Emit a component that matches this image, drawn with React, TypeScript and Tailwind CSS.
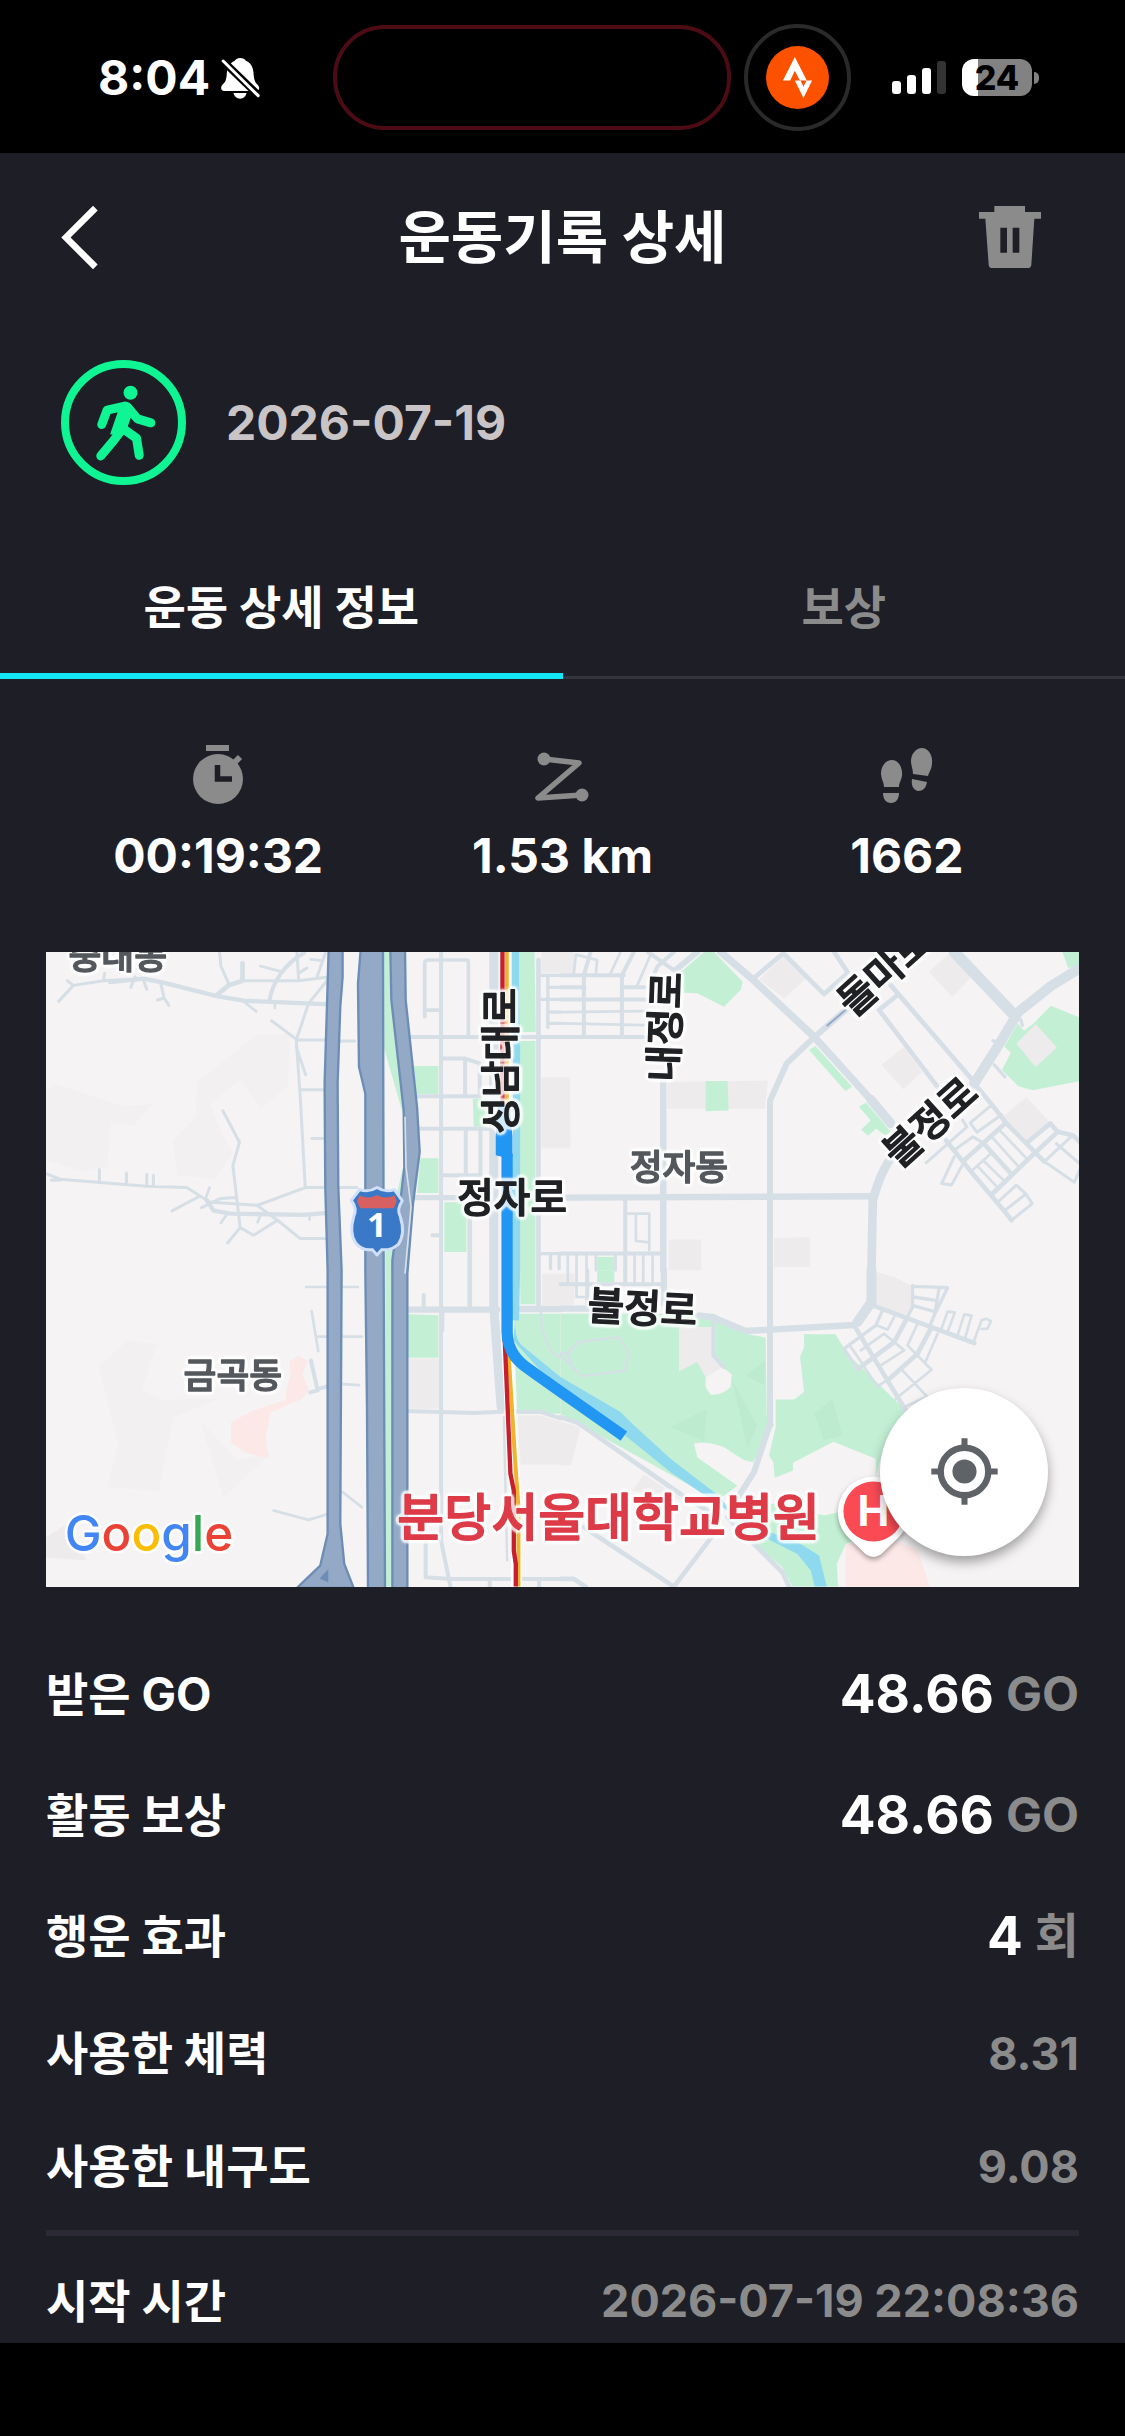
import React from "react";

const LABEL_FONT = "'Noto Sans CJK KR', 'Noto Sans', sans-serif";

function BellOffIcon() {
  return (
    <svg viewBox="510 76 122 126" className="h-[42px] w-[41px]" aria-hidden="true">
      <path
        d="M570 79c-9 0-14 5-17 9-15 6-22 20-23 36-1 18-3 26-12 34-4 4-5 8-5 11 0 6 4 9 9 9h96c6 0 9-4 9-9 0-3-2-7-6-11-8-8-10-18-11-34-1-19-9-32-23-37-3-5-9-8-17-8z"
        fill="#fff"
      />
      <path d="M550 184h39c-2 10-9 17-19 17s-18-7-20-17z" fill="#fff" />
      <path d="M512 82L634 200" stroke="#000" strokeWidth="23" />
      <path d="M519 88L624 192" stroke="#fff" strokeWidth="9" strokeLinecap="round" />
    </svg>
  );
}

function StravaIcon() {
  return (
    <svg viewBox="107 108 190 190" className="size-[63px]" aria-hidden="true">
      <circle cx="202" cy="203" r="95" fill="#fc5200" />
      <path d="M194 141L230 212H209L194 183L180 212H158Z" fill="#fff" />
      <path d="M194 212H211L220 231L229 212H246L220 265Z" fill="#fff" />
    </svg>
  );
}

function SignalIcon() {
  return (
    <div className="flex items-end gap-[6px]" role="img" aria-label="신호 세기">
      <span className="h-[13px] w-[9px] rounded-[3px] bg-white" />
      <span className="h-[19px] w-[9px] rounded-[3px] bg-white" />
      <span className="h-[26px] w-[9px] rounded-[3px] bg-white" />
      <span className="h-[33px] w-[9px] rounded-[3px] bg-[#333]" />
    </div>
  );
}

function StatusBar() {
  return (
    <div className="flex h-[153px] items-center bg-black pt-[2px] pr-[86px] pl-[98px] text-white">
      <div className="flex flex-1 items-center gap-[10px]">
        <span className="text-[48px] leading-none font-bold">8:04</span>
        <BellOffIcon />
      </div>
      <div className="flex items-center gap-[13px]">
        <div className="h-[105px] w-[398px] rounded-[52px] border-4 border-[#4d0c13]" />
        <div className="flex size-[107px] items-center justify-center rounded-full border-4 border-[#2a2a2a]">
          <StravaIcon />
        </div>
      </div>
      <div className="ml-[41px] flex items-center gap-[16px]">
        <SignalIcon />
        <div className="flex items-center gap-[2px]">
          <div className="flex h-[37px] w-[70px] items-center justify-center rounded-[12px] bg-linear-to-r from-white from-[23%] to-[#828282] to-[23%] text-[34px] leading-none font-extrabold text-black">
            24
          </div>
          <div className="h-[12px] w-[5px] rounded-r-full bg-[#828282]" />
        </div>
      </div>
    </div>
  );
}

function Header() {
  return (
    <header className="grid h-[168px] grid-cols-[1fr_auto_1fr] items-center pr-[84px] pl-[61px]">
      <button type="button" aria-label="뒤로" className="justify-self-start">
        <svg viewBox="34 524 112 194" className="h-[65px] w-[37px]" aria-hidden="true">
          <path d="M138 532L49 621L138 710" fill="none" stroke="#fff" strokeWidth="20" />
        </svg>
      </button>
      <h1 className="pl-[23px] text-[57px] leading-none font-bold text-white">운동기록 상세</h1>
      <button type="button" aria-label="삭제" className="justify-self-end">
        <svg viewBox="747 588 186 186" className="size-[62px]" aria-hidden="true">
          <path
            fillRule="evenodd"
            fill="#8b8b8b"
            d="M793 588h92v18h48v20h-20l-9 138q-1 10-11 10H787q-10 0-11-10l-10-138h-19v-20h46zM811 653v75h20v-75zM848 653v75h20v-75z"
          />
        </svg>
      </button>
    </header>
  );
}

function WalkIcon() {
  return (
    <svg viewBox="35 988 374 374" className="size-[125px]" role="img" aria-label="걷기">
      <circle cx="222" cy="1175" r="175" fill="none" stroke="#0ff593" strokeWidth="24" />
      <circle cx="243" cy="1086" r="21" fill="#0ff593" />
      <g fill="none" stroke="#0ff593" strokeWidth="27" strokeLinecap="round" strokeLinejoin="round">
        <path d="M226 1126L173 1138L157 1181" />
        <path d="M233 1128L264 1164L304 1176" />
        <path d="M222 1190L189 1233L154 1275" />
        <path d="M220 1193L261 1222L269 1273" />
      </g>
      <path d="M204 1146Q212 1118 232 1113Q250 1124 249 1146L233 1192L210 1214L182 1210Z" fill="#0ff593" />
    </svg>
  );
}

function StopwatchIcon() {
  return (
    <svg viewBox="0 0 120 120" className="size-[60px]" aria-hidden="true">
      <rect x="36" y="0" width="46" height="12" fill="#8b8b8b" />
      <circle cx="60" cy="68" r="50" fill="#8b8b8b" />
      <path d="M90 38L104 24" stroke="#8b8b8b" strokeWidth="12" />
      <path d="M59 40V68H88" fill="none" stroke="#1e1e26" strokeWidth="11" />
    </svg>
  );
}

function RouteIcon() {
  return (
    <svg viewBox="0 0 120 120" className="size-[60px]" aria-hidden="true">
      <path
        d="M24 28L94 36L12 106L100 100"
        fill="none"
        stroke="#8b8b8b"
        strokeWidth="11"
        strokeLinejoin="round"
      />
      <circle cx="24" cy="28" r="13" fill="#8b8b8b" />
      <circle cx="100" cy="100" r="13" fill="#8b8b8b" />
    </svg>
  );
}

function StepsIcon() {
  return (
    <svg viewBox="0 0 60 60" className="size-[60px]" aria-hidden="true">
      <g fill="#8b8b8b">
        <path d="M15 15C21 15 26 22 25 31C24 36 22 38 22 42H7C7 37 4 34 4 28C4 21 9 15 15 15Z" />
        <path d="M6 48H22C22 54 19 58 14 58C9 58 6 54 6 48Z" />
        <path d="M45 3C51 3 56 10 55 18C55 24 52 27 51 31L36 29C36 24 34 21 34 16C34 9 39 3 45 3Z" />
        <path d="M35 34L50 37C49 43 46 46 41 46C36 45 34 40 35 34Z" />
      </g>
    </svg>
  );
}

const stats = [
  { label: "운동 시간", value: "00:19:32", icon: <StopwatchIcon /> },
  { label: "거리", value: "1.53 km", icon: <RouteIcon /> },
  { label: "걸음 수", value: "1662", icon: <StepsIcon /> },
];

type Road = { w: number; d: string };

const westRoads: Road[] = [
  { w: 13, d: "M210 126L310 116L370 128L530 168L610 182L866 193" },
  { w: 9, d: "M56 184L100 136L190 122L300 116M82 122L100 136M190 122L194 100M310 120L320 148M285 110L272 142M362 130L372 174L386 196M352 180L372 174" },
  { w: 14, d: "M607 70V122L565 136L530 165" },
  { w: 9, d: "M538 36L542 78L565 130M607 122H775L860 112M770 36L775 115M830 112L855 40M775 100L800 84" },
  { w: 12, d: "M688 180Q694 140 722 100Q750 62 792 38" },
  { w: 8, d: "M660 78L720 94M812 58L845 62M612 186L648 214M704 190V204" },
  { w: 9, d: "M860 122L805 190L768 300L780 470L795 742L652 795L505 785M694 242L772 300H852M900 303H943M768 320L796 404M782 449H850M815 595H850M795 742H855M900 742H950" },
  { w: 9, d: "M548 512L598 606L578 676L600 862L640 885L712 840L780 895H858M562 908L600 862M712 840L650 795" },
  { w: 9, d: "M18 700L60 717L180 727L320 738L440 742L500 780M34 720H60M178 688V724M259 698V730M320 702V736M340 706V736M396 812L478 768M484 802L540 775L590 772" },
  { w: 13, d: "M500 780L520 811L570 820L790 824L864 818" },
  { w: 8, d: "M508 742L496 776M542 848L560 822M652 846L662 822M808 838V824" },
];

const centralRoads: Road[] = [
  { w: 27, d: "M1360 36V1100L1382 1400" },
  { w: 12, d: "M1202 36V1800L1230 1938" },
  { w: 11, d: "M1153 230V68Q1153 60 1165 60H1280Q1284 60 1284 70V285M1155 210H1200" },
  { w: 12, d: "M1100 291H1360M1440 291H1560M1122 468H1320M1132 566H1350M1204 705H1320V570M1276 570V700M1274 360V465M1318 460V370L1272 355H1204" },
  { w: 16, d: "M1117 772H1360" },
  { w: 14, d: "M1494 60V1100M1288 780V1100" },
  { w: 19, d: "M1094 1108H1370M1424 1106H1560" },
  { w: 12, d: "M1094 1412L1300 1418L1385 1414M1425 1414H1500L1560 1434M1206 1120V1170" },
  { w: 12, d: "M1150 1064V1106M1156 1800V1910L1230 1915H1560M1348 1920V1938M1496 1920V1938M1176 885H1200" },
  { w: 10, d: "M1500 106H1560M1500 178H1560M1522 110V262M1522 142H1560M1522 216H1560M1522 250H1560M1500 940H1560M1530 945V985M1556 945V985" },
  { w: 7, d: "M1390 1430L1400 1860M1500 1110Q1506 1230 1560 1252" },
  { w: 8, d: "M798 1040H858M910 1040H953M814 1112L834 1232M834 1189H858M910 1189H965M910 1331L956 1334M700 1710L805 1738L858 1722M906 1654L965 1700" },
  { w: 12, d: "M812 1260L832 1350L810 1356M832 1346L868 1336" },
];

const northEastRoads: Road[] = [
  { w: 19, d: "M308 400V990M20 772L940 768" },
  { w: 18, d: "M628 990V482L678 370L760 292L860 205L1010 60" },
  { w: 26, d: "M932 990L936 780Q960 690 1000 640" },
  { w: 22, d: "M480 36L578 120L760 290L930 478" },
  { w: 28, d: "M930 478L990 550" },
  { w: 34, d: "M1180 36L1360 225" },
  { w: 30, d: "M1556 85L1470 138L1372 216L1310 320L1240 430" },
  { w: 14, d: "M578 115L668 40L790 162L860 100M820 36L860 96M955 210L1010 165M985 130L1235 420M955 210L1130 440" },
  { w: 14, d: "M1240 430Q1300 500 1335 548L1450 664M1290 765L1420 640L1490 575L1535 585L1556 605M1155 600L1230 694L1330 812L1352 840" },
  { w: 14, d: "M1335 548L1210 660M1270 612L1350 700M1400 606L1468 550L1490 575" },
  { w: 9, d: "M1292 495L1228 548L1248 576L1322 524M1205 540L1218 560L1096 668M1180 630L1236 590L1270 610M1180 650L1142 730L1172 734L1208 668M1450 664L1540 726L1556 690M1450 664L1530 590M1486 610L1556 670M1310 786L1366 735L1394 760L1414 790L1352 840M1330 812L1394 762" },
  { w: 8, d: "M1296 594L1370 676M1318 572L1396 654M1250 678L1310 742M1266 660L1330 722M1230 694L1290 640" },
  { w: 18, d: "M410 36L345 90" },
  { w: 12, d: "M0 106H190M0 142H72M190 142H252M0 178H260M0 291H260M70 290V106L90 36M184 290V106L220 36M262 36L345 94M340 36L290 80L270 130" },
  { w: 8, d: "M0 216L250 213M0 250L250 255M40 100L46 44L110 60L106 100M150 100L180 36M230 136L270 44" },
  { w: 12, d: "M194 780V990M0 940H300" },
  { w: 8, d: "M200 820H266V930M226 825V902L262 906M22 945V990M48 945V990M106 945V990M165 945V990M222 940V990M248 940V990M276 940V990M78 945V990" },
  { w: 10, d: "M1296 302L1320 310M1300 374L1332 410M1380 240L1384 256" },
];

const southEastRoads: Road[] = [
  { w: 19, d: "M310 0V100M0 115H90M415 135L460 142L555 182L628 178L880 164" },
  { w: 18, d: "M628 0V460L580 605L535 675" },
  { w: 30, d: "M932 0V95L890 155" },
  { w: 12, d: "M458 145V255L490 290M0 42H310M80 0V110M194 0V42" },
  { w: 8, d: "M22 0V36M48 0V80H78M222 0V36M248 0V36M276 0V36" },
  { w: 14, d: "M0 440L50 456L370 678L440 720M70 770L340 948L460 790M500 740L665 905L685 948M0 925H40L75 948" },
  { w: 14, d: "M935 105L1240 218M880 165L980 330L1035 420M1038 145L1000 215L890 297M1110 175L1070 250L980 330" },
  { w: 10, d: "M965 120L945 165L850 235L890 297M1055 45V105L1125 125L1160 52L1058 48M1040 140L1058 105M1058 80L1125 90M1135 52L1122 130L1105 172" },
  { w: 8, d: "M948 165L980 178L1000 140M970 190L1030 240L960 285M970 190L900 240M1070 160L1040 225L1112 298L1005 385M1130 190L1095 272M1025 300L1098 378L1030 410M910 290L950 348L978 330M870 230L905 280M1140 180L1160 124L1182 126L1158 190M1190 195L1210 132L1232 136L1212 205M1238 215L1262 150L1275 145L1290 152L1280 175L1262 176" },
  { w: 7, d: "M0 248H22L55 215L175 200L205 245L195 300L65 318L0 255M22 248L36 295" },
];

function Roads({ items }: { items: Road[] }) {
  return (
    <g fill="none" stroke="#d6dfe6" strokeLinecap="round" strokeLinejoin="round">
      {items.map((road) => (
        <path key={road.d} d={road.d} strokeWidth={road.w} />
      ))}
    </g>
  );
}

type LabelProps = {
  x: number;
  y: number;
  size: number;
  color: string;
  rotate?: number;
  children: string;
};

function MapLabel({ x, y, size, color, rotate = 0, children }: LabelProps) {
  return (
    <g filter="url(#label-halo)">
      <text
        transform={`translate(${x} ${y}) rotate(${rotate})`}
        y={size * 0.37}
        textAnchor="middle"
        fontFamily={LABEL_FONT}
        fontSize={size}
        fontWeight="500"
        fill={color}
        stroke={color}
        strokeWidth="4"
        strokeLinejoin="round"
      >
        {children}
      </text>
    </g>
  );
}

function WorkoutMap() {
  return (
    <svg
      viewBox="0 0 3096 1902"
      className="block h-auto w-full bg-[#f5f3f4]"
      role="img"
      aria-label="운동 경로 지도"
    >
      <defs>
        <filter id="label-halo" x="-15%" y="-25%" width="130%" height="150%" colorInterpolationFilters="sRGB">
          <feGaussianBlur in="SourceAlpha" stdDeviation="6" result="soft" />
          <feComponentTransfer in="soft" result="spread">
            <feFuncR type="linear" slope="0" intercept="1" />
            <feFuncG type="linear" slope="0" intercept="1" />
            <feFuncB type="linear" slope="0" intercept="1" />
            <feFuncA type="linear" slope="9" intercept="0" />
          </feComponentTransfer>
          <feComponentTransfer in="spread" result="halo">
            <feFuncA type="linear" slope="0.8" />
          </feComponentTransfer>
          <feMerge>
            <feMergeNode in="halo" />
            <feMergeNode in="SourceGraphic" />
          </feMerge>
        </filter>
      </defs>
      <g transform="translate(-18 -36)">
        <g fill="#f2f0f1">
          <path d="M18 450L50 434L250 498L336 492L280 556L212 548L202 680L130 692L18 660Z" />
          <path d="M470 425L650 285L750 282L742 440L660 505L600 418L510 490L545 580L580 640L525 716L412 705L398 600L468 530Z" />
          <path d="M175 1280L260 1202L350 1210L305 1345L360 1378L540 1375L400 1430L355 1652L200 1640L236 1510Z" />
          <path d="M480 1440L590 1560L690 1540L550 1670Z" />
        </g>
        <g fill="#edebec">
          <path d="M1503 36H1600V98H1503ZM1503 412H1588L1590 624H1503Z" />
          <path d="M1104 1254H1196V1405H1104ZM1432 1425H1500L1616 1460L1592 1572H1440ZM1505 1000H1600V1095H1505Z" />
          <path d="M18 1790L80 1750L140 1860L18 1850Z" />
        </g>
        <g fill="#fce8e6">
          <path d="M748 1265L775 1246L803 1262L786 1302L806 1350L784 1376L690 1416L676 1490L685 1554L615 1536L573 1506V1445L640 1410L738 1378Q735 1340 752 1305Z" />
        </g>
        <g fill="#c3f0d5">
          <path d="M1030 36H1047L1050 180L1090 500V530L1030 320Z" />
          <path d="M1086 690L1060 800L1035 940V1938H1052V1000L1100 790V690Z" />
          <path d="M1120 378H1194V462H1128ZM1140 654H1194V758H1130ZM1212 786H1278V935H1212ZM1297 475H1350V560H1300Z" />
          <path d="M1430 36H1482L1486 276H1440ZM1430 303H1485V1092L1440 1092Z" />
          <path d="M1103 1122L1194 1125V1252H1103Z" />
          <path d="M1420 1120H1560V1420H1430Z" />
        </g>
        <g transform="translate(1560 0)">
          <g fill="#edebec">
            <path d="M0 40H40V98H0ZM320 426L622 422L612 506H320ZM596 118L668 50L735 116L670 175ZM1105 95L1170 36L1232 110L1174 171ZM962 375L1030 320L1084 396L1028 447ZM1320 535L1396 471L1466 545L1400 606ZM324 898H422V990H324ZM640 894L747 891V980H640Z" />
          </g>
          <g fill="#c3f0d5">
            <path d="M362 95L430 36H460L546 125L540 150L490 200L410 160L370 158Z" />
            <path d="M435 423H501L504 511L435 513ZM745 330L764 318L874 440L854 453ZM894 500L916 488L990 575L975 587L946 566L922 587L901 569L930 540Z" />
            <path d="M1504 36H1556V75L1522 84ZM1420 248L1470 197L1556 232V423L1415 450L1372 438L1323 390L1350 338L1330 320L1370 250L1390 272Z" />
            <path d="M110 950H161V990H110Z" />
          </g>
          <path d="M1366 310L1424 252L1488 322L1424 381Z" fill="#edebec" />
        </g>
        <g transform="translate(1560 990)">
          <g fill="#c3f0d5">
            <path d="M0 130H460L555 190L615 202L618 435L640 462L577 575L548 568L490 530Q440 512 400 519L410 560L530 646L470 690L0 430Z" />
            <path d="M730 192H824L860 250L1035 420L960 560L945 620V565L818 514L697 577V600L642 622L638 575L625 555L645 470V387H700L730 365L718 260L730 230Z" />
            <path d="M500 700H640L790 735L900 710V800L855 820L828 880L832 948H695L665 890L500 750Z" />
            <path d="M110 0H161V35H110Z" />
          </g>
          <g fill="#edebec">
            <path d="M948 5L1000 20L1055 48V115L1040 140L940 100ZM355 170H456V260L485 295L436 322L410 275L355 303Z" />
            <path d="M0 10H42V90H0ZM250 612L370 690L215 660ZM0 465L60 475L30 585H0Z" />
          </g>
          <path d="M485 290L513 312L510 350Q485 375 450 373L435 350V322Z" fill="#f5f3f4" />
          <path d="M855 820L1000 810L1070 838L1107 948H855Z" fill="#fce8e6" />
          <g fill="#bdebd0">
            <path d="M330 470L440 415L430 512ZM515 330L590 465L560 535ZM760 430L815 385L845 495L790 510ZM555 315L612 270V345Z" />
          </g>
        </g>

        <Roads items={westRoads} />
        <Roads items={centralRoads} />
        <g transform="translate(1560 0)">
          <Roads items={northEastRoads} />
          <path d="M798 258L856 208" stroke="#93a9c6" strokeWidth="6" />
        </g>
        <g transform="translate(1560 990)">
          <Roads items={southEastRoads} />
        </g>

        <g fill="#93a9c6" stroke="#6c8db5" strokeWidth="7" strokeLinejoin="round">
          <path d="M865 30L860 200L853 430L855 740L862 990V1780L840 1875L770 1942H940L912 1870L900 1750L904 990L894 740L892 430L900 200L907 110L907 30Z" />
          <path d="M961 30L953 130L956 380L975 460V990L980 1400L983 1945H1034L1030 990L1028 36V30Z" />
          <path d="M1050 30L1053 180L1090 510L1092 680L1078 800L1056 960V1945H1101V1000L1118 790L1138 635L1130 500L1096 180L1094 30Z" />
        </g>
        <path d="M1094 530L1097 680L1112 800L1094 1000" fill="none" stroke="#d6dfe6" strokeWidth="5" />
        <path d="M838 1914L864 1886V1926Z" fill="#6c8db5" />

        <path d="M1425 36V140L1428 300V990L1425 1140" fill="none" stroke="#8fd9ef" strokeWidth="22" />
        <path
          d="M1425 1140Q1420 1200 1450 1220L1560 1310L1740 1415L1775 1450L1890 1555L2040 1670L2060 1700L2150 1760L2280 1810L2335 1845L2358 1938H2322L2310 1890L2270 1840L2190 1800L2030 1690L1890 1595L1760 1490L1500 1290L1418 1200Z"
          fill="#8fd9ef"
        />

        <g fill="none" strokeLinejoin="round">
          <path d="M1393 36V600M1398 1180L1418 1560L1428 1700V1938" stroke="#fff" strokeWidth="34" />
          <path d="M1399 36V600M1402 1200L1424 1560L1434 1700V1938" stroke="#efb32f" strokeWidth="12" />
          <path d="M1386 36V600M1392 1180L1396 1270L1410 1600L1420 1650V1830L1426 1870V1938" stroke="#c4202f" strokeWidth="13" />
          <path
            d="M1400 640V1175Q1400 1235 1450 1275Q1480 1298 1750 1487"
            stroke="#2196f3"
            strokeWidth="34"
          />
        </g>
        <path d="M1372 490H1408L1416 590V650H1384L1366 645V590Z" fill="#2196f3" />

        <path
          d="M958 748Q985 758 1010 742Q1035 758 1062 748L1086 782Q1068 806 1080 830Q1096 880 1074 912Q1050 932 1024 928L1010 944L996 928Q966 932 946 908Q926 880 940 830Q952 806 933 780Z"
          fill="#3a78c8"
          stroke="#cfdffc"
          strokeWidth="9"
          strokeLinejoin="round"
        />
        <path d="M958 766Q985 778 1010 764Q1035 778 1062 766L1069 782L1060 804H960L950 784Z" fill="#d96060" />
        <text x="1010" y="889" textAnchor="middle" fontFamily="'Noto Sans', sans-serif" fontSize="104" fontWeight="700" fill="#fff">
          1
        </text>

        <MapLabel x={233} y={48} size={107} color="#54585d">중대동</MapLabel>
        <MapLabel x={578} y={1303} size={107} color="#54585d">금곡동</MapLabel>
        <MapLabel x={1915} y={679} size={107} color="#54585d">정자동</MapLabel>
        <MapLabel x={1380} y={362} size={119} color="#202124" rotate={-90}>성남대로</MapLabel>
        <MapLabel x={1872} y={260} size={119} color="#202124" rotate={-88}>내정로</MapLabel>
        <MapLabel x={1415} y={772} size={119} color="#202124">정자로</MapLabel>
        <MapLabel x={2530} y={92} size={119} color="#202124" rotate={-42}>돌마로</MapLabel>
        <MapLabel x={2667} y={545} size={119} color="#202124" rotate={-42}>불정로</MapLabel>
        <MapLabel x={1806} y={1102} size={119} color="#202124" rotate={3}>불정로</MapLabel>
        <MapLabel x={1704} y={1730} size={153} color="#dc3b47">분당서울대학교병원</MapLabel>

        <g>
          <path
            d="M2498 1608A107 107 0 0 1 2574 1790L2520 1842Q2498 1856 2476 1842L2422 1790A107 107 0 0 1 2498 1608Z"
            fill="#fff"
            className="drop-shadow-[0_8px_8px_rgba(0,0,0,0.35)]"
          />
          <circle cx="2498" cy="1713" r="90" fill="#fa4b55" />
          <text x="2498" y="1755" textAnchor="middle" fontFamily="Inter, sans-serif" fontSize="128" fontWeight="700" fill="#fff">
            H
          </text>
        </g>

        <text
          x="74"
          y="1830"
          fontFamily="Inter, sans-serif"
          fontSize="148"
          fontWeight="500"
          stroke="#fff"
          strokeOpacity="0.8"
          strokeWidth="16"
          strokeLinejoin="round"
          paintOrder="stroke"
        >
          <tspan fill="#4285f4">G</tspan>
          <tspan fill="#ea4335">o</tspan>
          <tspan fill="#fbbc05">o</tspan>
          <tspan fill="#4285f4">g</tspan>
          <tspan fill="#34a853">l</tspan>
          <tspan fill="#ea4335">e</tspan>
        </text>
      </g>
    </svg>
  );
}

type Reward = { label: string; value: string; unit: string };

const rewards: Reward[] = [
  { label: "받은 GO", value: "48.66", unit: "GO" },
  { label: "활동 보상", value: "48.66", unit: "GO" },
  { label: "행운 효과", value: "4", unit: "회" },
];

const usage = [
  { label: "사용한 체력", value: "8.31" },
  { label: "사용한 내구도", value: "9.08" },
];

export default function App() {
  return (
    <div className="flex min-h-screen flex-col bg-[#1e1e26] font-[Inter,'Noto_Sans_CJK_KR',sans-serif]">
      <StatusBar />
      <Header />

      <div className="flex items-center gap-[40px] px-[61px] pt-[39px]">
        <WalkIcon />
        <time dateTime="2026-07-19" className="text-[48px] leading-none font-bold text-[#c9c4c6]">
          2026-07-19
        </time>
      </div>

      <div role="tablist" className="mt-[50px] flex h-[144px] items-stretch text-[46px] leading-none font-bold">
        <button
          type="button"
          role="tab"
          aria-selected="true"
          className="flex-1 border-b-[6px] border-[#13e7f5] pt-[6px] text-white"
        >
          운동 상세 정보
        </button>
        <button
          type="button"
          role="tab"
          aria-selected="false"
          className="flex-1 border-b-[3px] border-[#35343f] pt-[3px] text-[#8b8b8b]"
        >
          보상
        </button>
      </div>

      <main className="px-[46px]">
        <ul className="grid grid-cols-3 pt-[66px]">
          {stats.map((stat) => (
            <li key={stat.label} className="flex flex-col items-center gap-[27px]">
              {stat.icon}
              <span className="text-[48px] leading-none font-bold text-white">{stat.value}</span>
            </li>
          ))}
        </ul>

        <div className="relative mt-[72px]">
          <WorkoutMap />
          <button
            type="button"
            aria-label="현재 위치"
            className="absolute right-[31px] bottom-[31px] flex size-[168px] items-center justify-center rounded-full bg-white shadow-[0_6px_12px_rgba(0,0,0,0.35)]"
          >
            <svg viewBox="-100 -100 200 200" className="size-[67px]" aria-hidden="true">
              <circle r="71" fill="none" stroke="#5f6368" strokeWidth="19" />
              <circle r="36" fill="#5f6368" />
              <path d="M0-99V-72M0 72V99M-99 0H-72M72 0H99" stroke="#5f6368" strokeWidth="18" />
            </svg>
          </button>
        </div>

        <dl className="pt-[47px] leading-none font-bold">
          {rewards.map((row) => (
            <div key={row.label} className="flex h-[121px] items-center justify-between">
              <dt className="text-[46px] text-white">{row.label}</dt>
              <dd className="flex items-center gap-[12px]">
                <span className="text-[53px] text-white">{row.value}</span>
                <span className="text-[48px] text-[#8b8b8b]">{row.unit}</span>
              </dd>
            </div>
          ))}
          {usage.map((row) => (
            <div key={row.label} className="flex h-[113px] items-center justify-between">
              <dt className="text-[46px] text-white">{row.label}</dt>
              <dd className="text-[45px] text-[#8b8b8b]">{row.value}</dd>
            </div>
          ))}
          <div className="mt-[7px] flex items-center justify-between border-t-[6px] border-[#2b2a34] pt-[42px] pb-[19px]">
            <dt className="text-[46px] text-white">시작 시간</dt>
            <dd className="text-[45px] text-[#8b8b8b]">2026-07-19 22:08:36</dd>
          </div>
        </dl>
      </main>

      <footer className="min-h-[93px] flex-1 bg-black" />
    </div>
  );
}
